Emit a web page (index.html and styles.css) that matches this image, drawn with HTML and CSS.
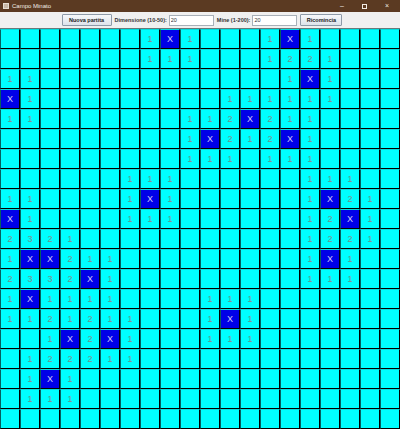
FILE: index.html
```html
<!DOCTYPE html>
<html lang="it">
<head>
  <meta charset="UTF-8">
  <title>Campo Minato</title>
  <link rel="stylesheet" href="styles.css">
</head>
<body>
  <div class="window">
    <div class="titlebar">
      <span class="app-icon"></span>
      <span class="title">Campo Minato</span>
      <span class="controls">
        <span class="ctl">&#8211;</span>
        <span class="ctl ctl-max"></span>
        <span class="ctl">&#215;</span>
      </span>
    </div>

    <div class="toolbar">
      <button class="btn btn-new">Nuova partita</button>
      <label class="lbl lbl-size">Dimensione (10-50):</label>
      <input class="field" type="text" value="20">
      <label class="lbl lbl-mines">Mine (1-200):</label>
      <input class="field" type="text" value="20">
      <button class="btn btn-restart">Ricomincia</button>
    </div>

    <div class="board" id="board"></div>
  </div>

  <script>
    // '.' = vuoto, 'X' = mina, cifra = mine vicine
    const rows = [
      '.......1X1...1X1....',
      '.......111...1221...',
      '11............1X1...',
      'X1.........111111...',
      '11.......112X211....',
      '.........1X212X1....',
      '.........111.111....',
      '......111......111..',
      '11....1X1......1X21.',
      'X1....111......12X1.',
      '2321...........1221.',
      '1XX211.........1X1..',
      '2332X1.........111..',
      '1X1111....111.......',
      '1121211...1X1.......',
      '..1X2X1...111.......',
      '.122211.............',
      '.1X1................',
      '.111................',
      '....................'
    ];

    const board = document.getElementById('board');

    rows.forEach(row => {
      for (const ch of row) {
        const cell = document.createElement('div');
        cell.className = 'cell';
        if (ch === 'X') {
          cell.classList.add('mine');
          cell.textContent = 'X';
        } else if (ch !== '.') {
          cell.textContent = ch;
        }
        board.appendChild(cell);
      }
    });
  </script>
</body>
</html>
```

FILE: styles.css
```css
body {
  margin: 0;
  font-family: 'Liberation Sans', Arial, sans-serif;
  overflow: hidden;
}

.window {
  width: 400px;
  height: 429px;
  background: #f0f0f0;
}

.titlebar {
  height: 12px;
  background: #5b3a22;
  display: flex;
  align-items: center;
  color: #f2ebe4;
}

.app-icon {
  width: 6px;
  height: 6px;
  margin-left: 3px;
  margin-right: 3px;
  background: #c8b8a8;
  border: 1px solid #e6ddd2;
  box-sizing: border-box;
}

.title {
  font-size: 6px;
}

.controls {
  margin-left: auto;
  margin-right: 2px;
  display: flex;
  align-items: center;
}

.ctl {
  width: 22px;
  text-align: center;
  font-size: 7px;
  line-height: 12px;
}

.ctl-max {
  width: 5px;
  height: 5px;
  border: 1px solid #f2ebe4;
  margin: 0 9px;
  box-sizing: border-box;
}

.toolbar {
  height: 17px;
  display: flex;
  align-items: center;
  justify-content: center;
  padding-left: 4px;
  box-sizing: border-box;
  border-bottom: 1px solid #6a7a7a;
}

.btn {
  height: 12px;
  padding: 0;
  font-family: 'Liberation Sans', Arial, sans-serif;
  font-size: 5.5px;
  font-weight: bold;
  color: #1a1a1a;
  background: linear-gradient(#f6f8fb, #dde3ea);
  border: 1px solid #8e9aa8;
  border-radius: 1px;
}

.btn-new {
  width: 50px;
}

.btn-restart {
  width: 42px;
  margin-left: 3px;
}

.lbl {
  font-size: 5.5px;
  font-weight: bold;
  color: #333;
  margin-left: 3px;
  margin-right: 2px;
}

.field {
  width: 45px;
  height: 11px;
  padding: 0 1px;
  box-sizing: border-box;
  font-family: 'Liberation Sans', Arial, sans-serif;
  font-size: 5.5px;
  color: #333;
  border: 1px solid #a8b0b8;
  background: #fff;
}

.board {
  display: grid;
  grid-template-columns: repeat(20, 20px);
  grid-template-rows: repeat(20, 20px);
}

.cell {
  box-sizing: border-box;
  background: #00ffff;
  border-right: 1px solid #000;
  border-bottom: 1px solid #000;
  border-left: 1px solid #066060;
  border-top: 1px solid #00dede;
  display: flex;
  align-items: center;
  justify-content: center;
  font-size: 9px;
  color: #7c8c8c;
}

.cell.mine {
  background: #0000e8;
  color: #d0d0f4;
}
```
